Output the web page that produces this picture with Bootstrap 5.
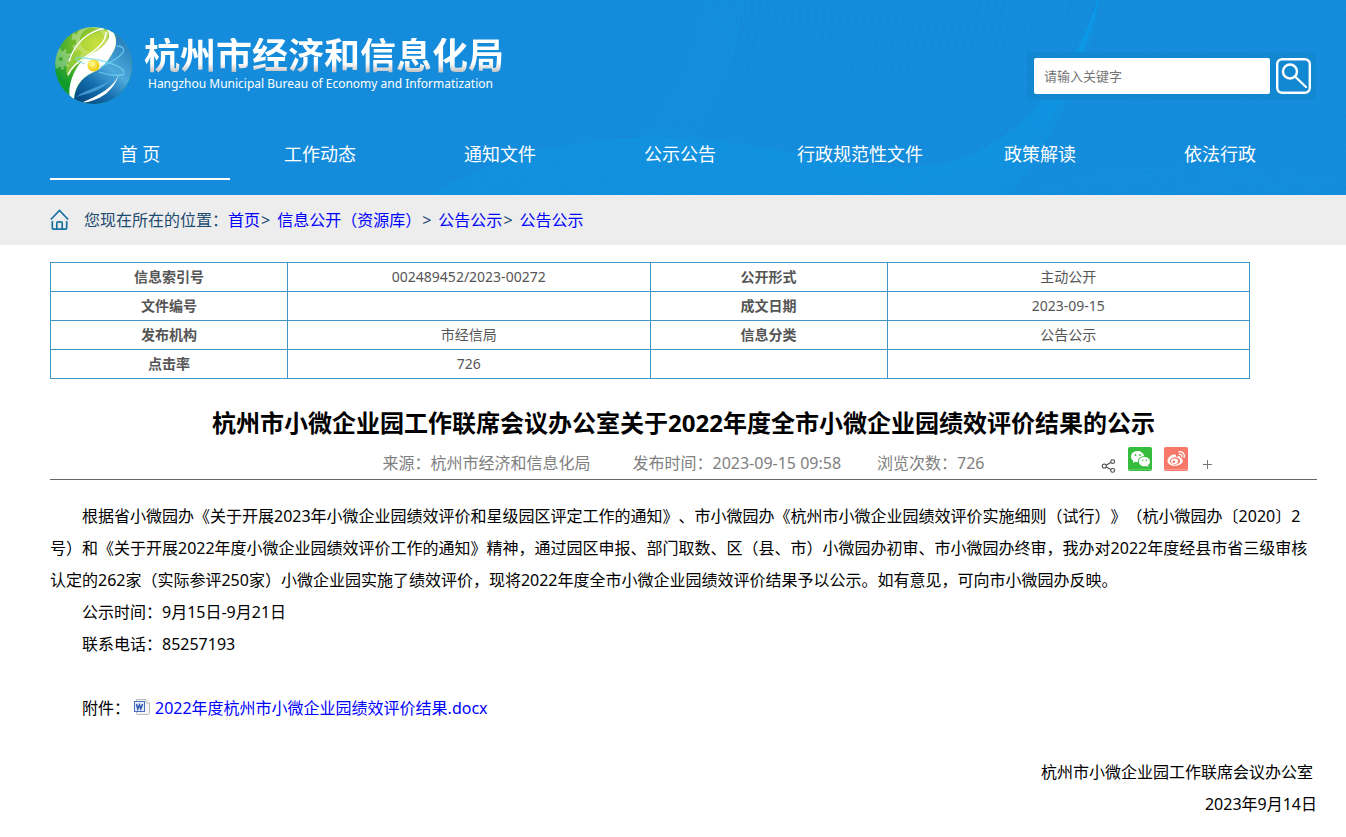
<!DOCTYPE html>
<html lang="zh-CN">
<head>
<meta charset="utf-8">
<meta name="viewport" content="width=device-width, initial-scale=1">
<title>杭州市经济和信息化局</title>
<link href="https://cdn.jsdelivr.net/npm/bootstrap@5.3.0/dist/css/bootstrap.min.css" rel="stylesheet">
<style>
body{font-family:"Noto Sans","Noto Sans CJK SC",sans-serif;font-size:16px;line-height:32px;color:#000;text-spacing-trim:space-all}
a{color:#00f;text-decoration:none}
.page-pad{padding-left:50px;padding-right:29px}
.site-header{background:#158cdb;color:#fff;overflow:hidden;padding-bottom:15px}
.header-waves{position:absolute;top:0;right:0;width:1346px;height:195px}
.brand-row{height:130px}
.brand-logo{margin-top:25px;margin-right:8px}
.brand-text{padding-top:38px}
.brand-name{font-size:36px;line-height:36px;font-weight:700;background:linear-gradient(#fff 70%,#bbb 98%);-webkit-background-clip:text;background-clip:text;color:transparent}
.brand-en{font-size:12px;line-height:20px;padding-left:4px}
.search-box{background:#1287d2;padding:6px 5px 6px 7px;margin:52px 1px 0 0;gap:6px}
.search-box input{width:236px;height:36px;border:0;border-radius:2px;padding:0 10px;font-size:13px;color:#333}
.search-box input::placeholder{color:#757575}
.search-box button{width:35px;height:36px;border:0;padding:0;background:none}
.main-nav a{width:180px;height:50px;line-height:48px;font-size:18px;text-align:center;color:#fff;border-bottom:2px solid transparent}
.main-nav a.active{border-color:#fff}
.crumbs{background:#ededed;height:50px;color:#1d4b70}
.crumb-home{margin-right:14px}
.crumb-sep{padding:0 7px 0 1px}
.info-table{width:1200px;max-width:100%;table-layout:fixed;font-size:14px;line-height:20px;color:#555;text-align:center;margin:17px 0 0}
.info-table td,.info-table th{border:1px solid #4297c8;height:29px;padding:4px}
.col-name{width:237px}
.doc-title{font-size:24px;line-height:32px;font-weight:700;text-align:center;margin:28px 0 0}
.doc-meta{color:#808080;border-bottom:1px solid #666;height:41px;line-height:32px;display:grid;grid-template-columns:1fr auto 1fr;padding-top:8px}
.meta-source{margin-right:42px}
.meta-date{margin-right:36px}
.share-bar{gap:12px;padding-right:104px;height:24px}
.share-bar a{display:flex}
.doc-body{padding-top:20px}
.doc-body p{margin:0;text-indent:32px}
.doc-body .sign{text-indent:0;text-align:right}
.doc-icon{vertical-align:-1px;margin:0 5px 0 4px}
@media (min-width:1340px){.doc-lead{white-space:nowrap}}
</style>
</head>
<body>
<header class="site-header position-relative">
<svg class="header-waves" viewBox="0 0 1346 195" aria-hidden="true">
<path d="M430 195C540 132 650 128 760 148S930 180 990 145Q1060 100 1098 0Q1075 110 1010 195Z" fill="#08a0ea" opacity=".2"/>
<g id="waves" fill="none" stroke="#0aa0ea"></g>
</svg>
<div class="page-pad position-relative">
<div class="brand-row d-flex justify-content-between">
<a class="d-flex text-white" href="#">
<svg class="brand-logo" width="86" height="80" viewBox="0 0 86 80" aria-hidden="true">
<defs>
<radialGradient id="lgGreen" cx=".55" cy=".25" r=".6"><stop offset="0" stop-color="#c3dc3c"/><stop offset=".4" stop-color="#7cc02c"/><stop offset="1" stop-color="#119a2e"/></radialGradient>
<linearGradient id="lgBlue" x1=".8" y1="0" x2=".2" y2="1"><stop offset="0" stop-color="#1a6fb0"/><stop offset=".5" stop-color="#4fa9dc"/><stop offset=".75" stop-color="#1670b0"/><stop offset="1" stop-color="#064a86"/></linearGradient>
<radialGradient id="lgSun" cx=".4" cy=".35" r=".6"><stop offset="0" stop-color="#fffb9a"/><stop offset="1" stop-color="#eecb08"/></radialGradient>
<clipPath id="lgClip"><circle cx="43.500" cy="40.500" r="38.500"/></clipPath>
</defs>
<g clip-path="url(#lgClip)">
<rect width="86" height="80" fill="url(#lgGreen)"/>
<g fill="none" stroke="#fff" opacity=".32"><circle cx="42" cy="15" r="14" stroke-width="4"/><circle cx="42" cy="15" r="18" stroke-width="5" stroke-dasharray="6 5.300"/><circle cx="11" cy="34" r="5" stroke-width="6"/><circle cx="11" cy="34" r="9" stroke-width="3" stroke-dasharray="3 2.600"/></g>
<path d="M55 0C68 5 68 20 63 27C56 40 50 44 44 47C34 51 24 60 24 80H86V0Z" fill="url(#lgBlue)"/>
<path d="M20 33C27 17 38 7 58 5C60 18 46 26 35 33C26 39 20 48 18 52C15 46 16 40 20 33Z" fill="#d4e648" opacity=".45"/>
<path d="M53 1C68 4 68 20 63 27C56 40 50 44 44 47C34 51 24 60 24 77L20 73C17 62 24 42 35 33C46 26 61 19 59 8C57 4 55 2 53 1Z" fill="#fff"/>
<path d="M19 36C25 18 38 6 56 3M18 50C24 33 56 26 56 7" fill="none" stroke="#fff" stroke-width="1.400"/>
<path d="M69 49C64 62 50 70 31 78C50 76 64 66 69 49Z" fill="#fff"/>
<path d="M26 72C36 69 52 66 62 54C52 62 36 64 26 72Z" fill="#4fa6da" opacity=".8"/>
<path d="M35 39C24 35 22 31 34 33C55 35 76 42 74 49C72 51 60 51 49 47M67 21C80 22 74 32 50 42" fill="none" stroke="#72daf0" stroke-width="1.300" opacity=".75"/>
<circle cx="43.500" cy="40.500" r="6" fill="url(#lgSun)"/>
</g>
</svg>
<span class="brand-text d-block"><span class="brand-name d-block">杭州市经济和信息化局</span><span class="brand-en d-block" lang="en">Hangzhou Municipal Bureau of Economy and Informatization</span></span>
</a>
<form class="search-box d-flex align-self-start" onsubmit="return false">
<input type="text" placeholder="请输入关键字" aria-label="请输入关键字">
<button type="submit" aria-label="搜索"><svg class="d-block" width="35" height="36" viewBox="0 0 35 36" fill="none" stroke="#fff"><rect x="1.200" y="1.200" width="32.600" height="33.600" rx="5" stroke-width="2.400"/><circle cx="14" cy="13.500" r="7" stroke-width="2.500"/><path d="M19 18.500L30 29" stroke-width="2.300" stroke-linecap="round"/></svg></button>
</form>
</div>
<nav class="main-nav d-flex"><a class="active" href="#">首 页</a><a href="#">工作动态</a><a href="#">通知文件</a><a href="#">公示公告</a><a href="#">行政规范性文件</a><a href="#">政策解读</a><a href="#">依法行政</a></nav>
</div>
</header>
<nav class="crumbs page-pad d-flex align-items-center" aria-label="位置">
<svg class="crumb-home" width="20" height="22" viewBox="0 0 20 22" fill="none" stroke="#1670a0" stroke-width="1.700" aria-hidden="true"><path d="M.8 10.500L9.500 1.500L18.200 10.500M2.300 12V18.500Q2.300 20.200 4 20.200H15Q16.700 20.200 16.700 18.500V12M6.800 20V14.300Q6.800 12.800 8.200 12.800H10.800Q12.200 12.800 12.200 14.300V20"/></svg>
<span>您现在所在的位置：</span><a href="#">首页</a><span class="crumb-sep">&gt;</span><a href="#">信息公开（资源库）</a><span class="crumb-sep">&gt;</span><a href="#">公告公示</a><span class="crumb-sep">&gt;</span><a href="#">公告公示</a>
</nav>
<main class="page-pad">
<table class="info-table">
<colgroup><col class="col-name"><col><col class="col-name"><col></colgroup>
<tbody>
<tr><th>信息索引号</th><td>002489452/2023-00272</td><th>公开形式</th><td>主动公开</td></tr>
<tr><th>文件编号</th><td></td><th>成文日期</th><td>2023-09-15</td></tr>
<tr><th>发布机构</th><td>市经信局</td><th>信息分类</th><td>公告公示</td></tr>
<tr><th>点击率</th><td>726</td><th></th><td></td></tr>
</tbody>
</table>
<article>
<h1 class="doc-title">杭州市小微企业园工作联席会议办公室关于2022年度全市小微企业园绩效评价结果的公示</h1>
<div class="doc-meta">
<div></div>
<div class="d-flex"><span class="meta-source">来源：杭州市经济和信息化局</span><span class="meta-date">发布时间：2023-09-15 09:58</span><span>浏览次数：726</span></div>
<div class="share-bar d-flex justify-content-end align-items-start">
<a class="mt-2 pt-1" href="#" aria-label="分享"><svg width="15" height="14" viewBox="0 0 15 15" fill="none" stroke="#444" stroke-width="1.100"><circle cx="3" cy="7.500" r="2.200"/><circle cx="12" cy="2.800" r="2.100"/><circle cx="12" cy="12.200" r="2.100"/><path d="M5.200 6.500L10 3.800M5.200 8.500L10 11.200"/></svg></a>
<a href="#" aria-label="微信"><svg width="24" height="24" viewBox="0 0 24 24"><rect width="24" height="24" rx="2" fill="#37bd3d"/><path d="M1 22.500H23" stroke="#72d476" stroke-width=".7"/><path d="M9.500 4C5.900 4 3 6.400 3 9.600c0 1.800.9 3.300 2.400 4.300L5 16l2.300-1.200c.9.200 1.800.4 2.700.3-.5-3.500 2.800-6 6.200-5.800C15.600 6 12.800 4 9.500 4Z" fill="#fff"/><path d="M16.500 10c-3.200 0-5.600 2.100-5.600 4.700s2.400 4.600 5.600 4.600c.7 0 1.400-.1 2-.3l1.900 1-.5-1.700c1.300-.9 2.100-2.200 2.100-3.600 0-2.600-2.400-4.700-5.500-4.700Z" fill="#fff"/><g fill="#37bd3d"><circle cx="7.500" cy="8" r=".9"/><circle cx="12" cy="8" r=".9"/><circle cx="14.700" cy="13.300" r=".8"/><circle cx="18.400" cy="13.300" r=".8"/></g></svg></a>
<a href="#" aria-label="微博"><svg width="24" height="24" viewBox="0 0 24 24"><rect width="24" height="24" rx="2" fill="#f77868"/><path d="M1 22.500H23" stroke="#ffa79c" stroke-width=".7"/><path d="M10.500 7.500C8 6.900 3.500 10.500 3.500 14c0 3 3.500 4.800 7.300 4.800 4.700 0 8-2.600 8-5 0-1.500-1.200-2.400-2.500-2.700.5-1.900-1.300-2.300-4.300-1.200.3-1.200 0-2.100-1.500-2.400Z" fill="#fff"/><ellipse cx="11" cy="14" rx="5.200" ry="3.700" fill="#f77868"/><ellipse cx="10.500" cy="14.200" rx="3.500" ry="2.800" fill="#fff"/><circle cx="9.800" cy="14.700" r="1.300" fill="#f77868"/><path d="M15 4.800c3.300-.6 6 1.900 5.200 5.500M15.300 7.300c1.700-.3 2.900.9 2.500 2.600" fill="none" stroke="#fff" stroke-width="1.300" stroke-linecap="round"/></svg></a>
<a class="mt-2 pt-1" href="#" aria-label="更多"><svg width="13" height="11" viewBox="0 0 13 11" stroke="#777"><path d="M3 5.500H12M7.500 1V10"/></svg></a>
</div>
</div>
<div class="doc-body">
<p class="doc-lead">根据省小微园办《关于开展2023年小微企业园绩效评价和星级园区评定工作的通知》、市小微园办《杭州市小微企业园绩效评价实施细则（试行）》（杭小微园办〔2020〕2<br>号）和《关于开展2022年度小微企业园绩效评价工作的通知》精神，通过园区申报、部门取数、区（县、市）小微园办初审、市小微园办终审，我办对2022年度经县市省三级审核<br>认定的262家（实际参评250家）小微企业园实施了绩效评价，现将2022年度全市小微企业园绩效评价结果予以公示。如有意见，可向市小微园办反映。</p>
<p>公示时间：9月15日-9月21日</p>
<p>联系电话：85257193</p>
<p>&nbsp;</p>
<p>附件：<svg class="doc-icon" width="16" height="16" viewBox="0 0 16 16" aria-hidden="true"><path d="M2.500.5H12L15.500 4V14.500Q15.500 15.500 14.500 15.500H3.500Q2.500 15.500 2.500 14.500Z" fill="#f4f4f4" stroke="#bbb"/><path d="M12 .5V4H15.500" fill="#fff" stroke="#bbb"/><rect x=".5" y="2.500" width="10" height="10" fill="#e6edfb" stroke="#4a6fc0"/><path d="M2.500 5L3.800 10L5.500 6L6.800 10L8.600 5" fill="none" stroke="#3158b0" stroke-width="1.500"/></svg><a href="#">2022年度杭州市小微企业园绩效评价结果.docx</a></p>
<p>&nbsp;</p>
<p class="sign pe-1">杭州市小微企业园工作联席会议办公室</p>
<p class="sign">2023年9月14日</p>
</div>
</article>
</main>
<script src="https://cdn.jsdelivr.net/npm/bootstrap@5.3.0/dist/js/bootstrap.bundle.min.js"></script>
<script>
// Fills the header with families of fine lines, each blended between two cubic curves.
function drawFamily(from, to, count, opacity) {
  const group = document.getElementById('waves');
  for (let i = 0; i <= count; i++) {
    const p = from.map((v, k) => (v + (to[k] - v) * i / count).toFixed(1));
    const path = document.createElementNS('http://www.w3.org/2000/svg', 'path');
    path.setAttribute('d', 'M' + p[0] + ' ' + p[1] + 'C' + p.slice(2).join(' '));
    path.setAttribute('opacity', opacity);
    group.appendChild(path);
  }
}
drawFamily([702,0,698,50,670,100,635,145], [740,0,740,50,710,100,690,145], 12, .3);
drawFamily([740,0,740,60,710,110,690,145], [1098,0,1090,80,1040,150,1000,195], 44, .28);
drawFamily([430,195,620,90,740,150,860,165], [600,230,700,190,800,200,960,210], 14, .3);
drawFamily([860,165,980,185,1060,120,1098,0], [960,210,1000,195,1075,110,1098,0], 12, .3);
drawFamily([1098,0,1090,80,1040,150,1010,195], [1560,0,1510,80,1400,140,1330,195], 46, .32);
drawFamily([1020,195,1110,160,1230,160,1346,185], [1040,230,1120,190,1230,190,1346,215], 5, .25);
</script>
</body>
</html>
